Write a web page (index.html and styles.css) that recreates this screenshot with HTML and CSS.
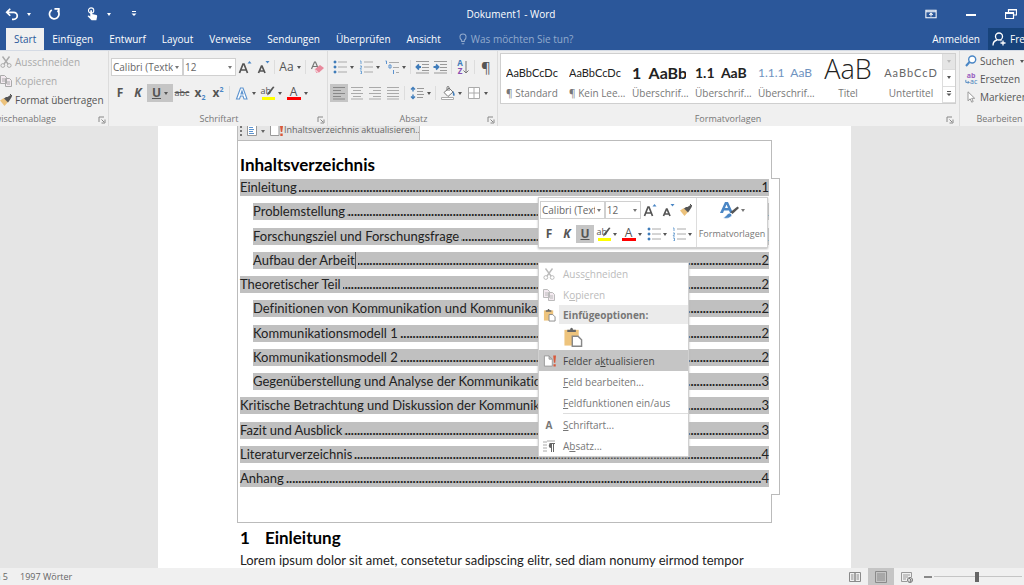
FILE: index.html
```html
<!DOCTYPE html>
<html lang="de">
<head>
    <meta charset="UTF-8">
    <title>Dokument1 - Word</title>
    <meta name="viewport" content="width=device-width, initial-scale=1.0">
    <link rel="stylesheet" href="styles.css">
</head>
<body>
<!-- Icon sprite -->
<svg class="sprite" aria-hidden="true">
    <symbol id="undo" viewBox="0 0 16 16"><path d="M6 2 2 6l4 4M2.500 6H10a4 4 0 0 1 0 8H8" fill="none" stroke="currentColor" stroke-width="2"/></symbol>
    <symbol id="redo" viewBox="0 0 16 16"><path d="M5.500 3.300A5.500 5.500 0 1 0 12 4M8.500 2h5v5" fill="none" stroke="currentColor" stroke-width="2"/></symbol>
    <symbol id="touch" viewBox="0 0 16 16"><circle cx="7" cy="4" r="3" fill="none" stroke="currentColor" stroke-width="1.300"/><path d="M6 4.500a1 1 0 0 1 2 0V8l5 1.200c1 .3 1 1 .8 2L13 15H7.500L3 10.500c.5-1 1.500-.8 3 .3z" fill="currentColor"/></symbol>
    <symbol id="customize" viewBox="0 0 8 8"><path d="M2 1.500h4" stroke="currentColor"/><path d="M1.500 3.500h5L4 6z" fill="currentColor"/></symbol>
    <symbol id="ribbon-opts" viewBox="0 0 14 12"><path d="M1 1.500h12v9H1zM1 3.500h12M7 9V5M5 7l2-2 2 2" fill="none" stroke="currentColor" stroke-width="1.200"/></symbol>
    <symbol id="minimize" viewBox="0 0 12 12"><path d="M1 7h10" stroke="currentColor" stroke-width="2"/></symbol>
    <symbol id="restore" viewBox="0 0 12 12"><path d="M3.500 4V1.500h8V7H9M.5 4.500h8v6h-8zM3 2h8M.5 5.500h8" fill="none" stroke="currentColor" stroke-width="1.200"/></symbol>
    <symbol id="bulb" viewBox="0 0 10 14"><path d="M3.500 10V8.500C.5 6.500.5 1.200 5 1.200s4.500 5.300 1.500 7.300V10zM3.500 12.500h3" fill="none" stroke="currentColor" stroke-width="1.200"/></symbol>
    <symbol id="person" viewBox="0 0 14 14"><circle cx="7" cy="4.500" r="3.500" fill="none" stroke="currentColor" stroke-width="1.300"/><path d="M1 13.500c0-3 2-5 4-5.500M8.500 8.500l1 .5M11 8.500v5M8.500 11h5" fill="none" stroke="currentColor" stroke-width="1.300"/></symbol>
    <symbol id="cut" viewBox="0 0 12 12"><path d="M2.500.5 8 8M9.500.5 4 8" stroke="currentColor" stroke-width="1.400"/><circle cx="2.800" cy="9.500" r="1.900" fill="none" stroke="currentColor"/><circle cx="9.200" cy="9.500" r="1.900" fill="none" stroke="currentColor"/></symbol>
    <symbol id="copy" viewBox="0 0 12 12"><path d="M.5.5h4l2 2v6h-6zM5.500 3.500h4l2 2v6h-6z" fill="#f3eaf0" stroke="currentColor"/><path d="M2 4h3M2 6h3M7 7h3M7 9h3" stroke="currentColor"/></symbol>
    <symbol id="brush" viewBox="0 0 12 12"><path d="M0 6.500 4 4l4 4-3.500 4z" fill="#ecc27c"/><path d="M4 4.500 8 8.500l1.500-2L12 2.500 10.500 1 7.500 3 6 3z" fill="#555"/><path d="M10 0l2 2" stroke="#555"/></symbol>
    <symbol id="paste" viewBox="0 0 14 14"><path d="M1 2h10v11H1z" fill="#eec47d"/><path d="M3 3.500V2h2c0-2 2-2 2 0h2v1.500z" fill="#666"/><path d="M6.500 6.500h4l2.500 2.500v4.500H6.500z" fill="#fff" stroke="#888"/></symbol>
    <symbol id="grow" viewBox="0 0 14 14"><path d="M1.500 13 5 4h1l3.500 9M3 10h5" fill="none" stroke="#555" stroke-width="1.700"/><path d="M9.500 3.500 11.500 1l2 2.500z" fill="#4a86c5"/></symbol>
    <symbol id="shrink" viewBox="0 0 14 14"><path d="M2.500 13 5.500 6h.5l3 7M4 11h4" fill="none" stroke="#555" stroke-width="1.700"/><path d="M9.500 1h4l-2 2.500z" fill="#4a86c5"/></symbol>
    <symbol id="eraser" viewBox="0 0 14 14"><path d="M1.500 9 4.500 2h1L8 8M3 6.500h4" fill="none" stroke="#777" stroke-width="1.200"/><path d="M4.500 9.500 10 5l4 3-5.500 5H6.500z" fill="#e8899c"/><path d="m5 9.500 3.500 3.500" stroke="#fff"/></symbol>
    <symbol id="effect" viewBox="0 0 14 14"><path d="M1.500 13 5.500 2h2.500l4 11H9L8 10H5.500l-1 3zM6 8h2L7 5z" fill="#fff" stroke="#5c93cf" stroke-width="1.100"/></symbol>
    <symbol id="pen" viewBox="0 0 14 14"><path d="M13.500 1 12 .5 7 6.500l-1 3 2.500-1.500z" fill="#555"/><path d="M1 11h13v3H1z" fill="#ff0"/></symbol>
    <symbol id="bullets" viewBox="0 0 14 14"><path d="M1 1h2v2H1zM1 6h2v2H1zM1 11h2v2H1z" fill="#3f7cba" stroke="#3f7cba" stroke-width=".6"/><path d="M5 2h9M5 7h9M5 12h9" stroke="#aaa"/></symbol>
    <symbol id="numbers" viewBox="0 0 14 14"><path d="M1 1h1v3M1 6h1.500v1L1 9h2M1 11h1.500v3H1" fill="none" stroke="#72a4d4"/><path d="M5 2h9M5 7h9M5 12h9" stroke="#aaa"/></symbol>
    <symbol id="levels" viewBox="0 0 14 14"><path d="M.5 1h1v3M4 5h2v3H4zM8.500 10v4" fill="none" stroke="#5c93cf"/><path d="M4 2.500h10M8 7.500h6M11 12.500h3" stroke="#aaa"/></symbol>
    <symbol id="outdent" viewBox="0 0 14 14"><path d="M1 1.500h13M7 4.500h7M7 7.500h7M7 10.500h7M1 13h13" stroke="#999"/><path d="M6 7H2M4 4.500 1.500 7 4 9.500" fill="none" stroke="#3f7cba" stroke-width="1.800"/></symbol>
    <symbol id="indent" viewBox="0 0 14 14"><path d="M1 1.500h13M7 4.500h7M7 7.500h7M7 10.500h7M1 13h13" stroke="#999"/><path d="M.5 7h4M3 4.500 5.500 7 3 9.500" fill="none" stroke="#3f7cba" stroke-width="1.800"/></symbol>
    <symbol id="arrow-down" viewBox="0 0 6 14"><path d="M3 1v12M.5 10.500 3 13l2.500-2.500" fill="none" stroke="#777"/></symbol>
    <symbol id="al" viewBox="0 0 14 14"><path d="M1 1.500h12M1 4.500h8M1 7.500h12M1 10.500h8M1 13h12" stroke="#888"/></symbol>
    <symbol id="ac" viewBox="0 0 14 14"><path d="M1 1.500h12M3 4.500h8M1 7.500h12M3 10.500h8M1 13h12" stroke="#aaa"/></symbol>
    <symbol id="ar" viewBox="0 0 14 14"><path d="M1 1.500h12M5 4.500h8M1 7.500h12M5 10.500h8M1 13h12" stroke="#aaa"/></symbol>
    <symbol id="aj" viewBox="0 0 14 14"><path d="M1 1.500h12M1 4.500h12M1 7.500h12M1 10.500h12M1 13h12" stroke="#aaa"/></symbol>
    <symbol id="spacing" viewBox="0 0 14 14"><path d="M3 1.500v4M3 8.500v4M1 3.500 3 1.500l2 2M1 10.500l2 2 2-2" fill="none" stroke="#3f7cba" stroke-width="1.400"/><path d="M7 2.500h7M7 5.500h6M7 8.500h7M7 11.500h6" stroke="#999"/></symbol>
    <symbol id="bucket" viewBox="0 0 14 14"><path d="M3 6.500 8 2l4 4-5 4.500z" fill="#fff" stroke="#777"/><path d="M6 5V1.500c0-1.500 2-1.500 2 0V5" fill="none" stroke="#777"/><path d="M12 5c2 2 2 5 1 5s-1.500-2-1-5z" fill="#3f7cba"/><path d="M.5 11.500h12v2H.5z" fill="#fff" stroke="#aaa"/></symbol>
    <symbol id="borders" viewBox="0 0 14 14"><path d="M1.500 1.500h11v11h-11zM7 1.500v11M1.500 7h11" fill="#fff" stroke="#aaa"/></symbol>
    <symbol id="launcher" viewBox="0 0 8 8"><path d="M1 6V1h5M3.500 3.500 6 6M7 3.500V7H3.500" fill="none" stroke="#888"/></symbol>
    <symbol id="search" viewBox="0 0 12 12"><circle cx="7.200" cy="4.500" r="3.500" fill="#fff" stroke="#4a86c5" stroke-width="1.400"/><path d="M4.500 7 1 11" stroke="#4a86c5" stroke-width="2"/></symbol>
    <symbol id="swap" viewBox="0 0 6 5"><path d="M1 0v3h4M3.500 1.500 5 3 3.500 4.500" fill="none" stroke="#3f7cba"/></symbol>
    <symbol id="cursor" viewBox="0 0 12 12"><path d="M3 .8v9l2.200-2 1.500 3.400 1.500-.7-1.500-3.200h3z" fill="#fff" stroke="#999"/></symbol>
    <symbol id="toc" viewBox="0 0 10 10"><path d="M.5-1h9V9.500h-9z" fill="#fff" stroke="#999"/><path d="M2 1.500h4M2 3.500h5M2 5.500h4M2 7.500h5" stroke="#5c93cf"/></symbol>
    <symbol id="update" viewBox="0 0 14 14"><path d="M1.500 1.500h5L10 5v7.500H1.500zM6.500 1.500V5H10" fill="#fff" stroke="#999"/><path d="M11 1h3l-.8 8h-1.400zM11.300 10.500h2.400v2.500h-2.400z" fill="#d8583a"/></symbol>
    <symbol id="update-bar" viewBox="0 0 14 10"><path d="M1.500-1v10.500H10V-1z" fill="#fff" stroke="#999"/><path d="M11 0h3l-.8 6h-1.400zM11.300 7.500h2.400V10h-2.400z" fill="#d8583a"/></symbol>
    <symbol id="styles" viewBox="0 0 20 18"><path d="M1 12 6 1h3l5 11h-3l-1-2.500H5L4 12zM6 7h3L7.500 3.500z" fill="#4a86c5"/><path d="M18.500 5.500 20 7l-6.500 6-2-2z" fill="#555"/><path d="M4 17c3-1 4-5 7-5l2 2c-1 3-5 4-9 3z" fill="#4a86c5" stroke="#fff" stroke-width=".6"/></symbol>
    <symbol id="para" viewBox="0 0 12 12"><path d="M0 2h4M0 5h4M0 8h4M0 11h4M4 1h8" stroke="#aaa"/><path d="M8.500 4v8M10.500 4v8M6.500 3.500H12" stroke="#666"/><path d="M9 3.500H8a2 2 0 0 0 0 4.500h1z" fill="#666"/></symbol>
    <symbol id="read" viewBox="0 0 12 12"><path d="M.5 1.500H6v9H.5zM6 1.500h5.500v9H6zM2 4h2.500M2 6h2.500M2 8h2.500M7.500 4H10M7.500 6H10M7.500 8H10" fill="none" stroke="#8a8a8a"/></symbol>
    <symbol id="print" viewBox="0 0 12 12"><path d="M.5.5h11v11H.5zM2 3h8M2 5h8M2 7h8M2 9h8" fill="none" stroke="#8a8a8a"/></symbol>
    <symbol id="web" viewBox="0 0 12 12"><path d="M6 10.500H.5v-9h10V6M2 4h7M2 6h5M2 8h3" fill="none" stroke="#999"/><circle cx="9" cy="9" r="2.500" fill="#ddd" stroke="#777"/><path d="m8 7 2 2-1 2" fill="none" stroke="#777"/></symbol>
</svg>

<header class="titlebar">
    <div class="quick">
        <button class="plain" aria-label="Rückgängig"><svg class="icon"><use href="#undo"/></svg></button>
        <i class="caret"></i>
        <button class="plain" aria-label="Wiederholen"><svg class="icon"><use href="#redo"/></svg></button>
        <button class="plain touch" aria-label="Touchmodus"><svg class="icon"><use href="#touch"/></svg></button>
        <i class="caret"></i>
        <button class="plain more" aria-label="Anpassen"><svg class="icon-xs"><use href="#customize"/></svg></button>
    </div>
    <h1 class="title">Dokument1 - Word</h1>
    <div class="window-buttons">
        <button class="plain" aria-label="Menüband-Anzeige"><svg class="icon-sm"><use href="#ribbon-opts"/></svg></button>
        <button class="plain" aria-label="Minimieren"><svg class="icon-sm"><use href="#minimize"/></svg></button>
        <button class="plain" aria-label="Verkleinern"><svg class="icon-sm"><use href="#restore"/></svg></button>
    </div>
</header>

<nav class="tabs">
    <a href="#" class="tab active">Start</a>
    <a href="#" class="tab">Einfügen</a>
    <a href="#" class="tab">Entwurf</a>
    <a href="#" class="tab">Layout</a>
    <a href="#" class="tab">Verweise</a>
    <a href="#" class="tab">Sendungen</a>
    <a href="#" class="tab">Überprüfen</a>
    <a href="#" class="tab">Ansicht</a>
    <button class="plain tell-me"><svg class="icon-sm"><use href="#bulb"/></svg>Was möchten Sie tun?</button>
    <a href="#" class="tab sign-in">Anmelden</a>
    <button class="plain share"><svg class="icon"><use href="#person"/></svg>Freigeben</button>
</nav>

<div class="ribbon">
    <section class="group clipboard">
        <div class="stack">
            <button class="plain cmd" disabled><svg class="icon-sm"><use href="#cut"/></svg>Ausschneiden</button>
            <button class="plain cmd" disabled><svg class="icon-sm"><use href="#copy"/></svg>Kopieren</button>
            <button class="plain cmd"><svg class="icon-sm"><use href="#brush"/></svg>Format übertragen</button>
        </div>
        <div class="group-label"><span class="cut-left">Zwischenablage</span><svg class="launcher"><use href="#launcher"/></svg></div>
    </section>

    <section class="group font">
        <div class="row">
            <label class="combo combo-font"><select aria-label="Schriftart"><option>Calibri (Textkörper)</option></select></label>
            <label class="combo combo-size"><select aria-label="Schriftgrad"><option>12</option></select></label>
            <button class="tool" aria-label="Vergrößern"><svg class="icon"><use href="#grow"/></svg></button>
            <button class="tool" aria-label="Verkleinern"><svg class="icon"><use href="#shrink"/></svg></button>
            <i class="sep"></i>
            <button class="tool drop big">Aa<i class="caret"></i></button>
            <i class="sep"></i>
            <button class="tool" aria-label="Formatierung löschen"><svg class="icon"><use href="#eraser"/></svg></button>
        </div>
        <div class="row">
            <button class="tool"><b>F</b></button>
            <button class="tool"><b><em>K</em></b></button>
            <button class="tool drop on"><b><u>U</u></b><i class="caret"></i></button>
            <button class="tool small"><s>abc</s></button>
            <button class="tool"><b>x<sub>2</sub></b></button>
            <button class="tool"><b>x<sup>2</sup></b></button>
            <i class="sep"></i>
            <button class="tool drop" aria-label="Texteffekte"><svg class="icon"><use href="#effect"/></svg><i class="caret"></i></button>
            <button class="tool drop"><span class="marker"><svg class="icon"><use href="#pen"/></svg>ab</span><i class="caret"></i></button>
            <button class="tool drop"><span class="red">A</span><i class="caret"></i></button>
        </div>
        <div class="group-label">Schriftart<svg class="launcher"><use href="#launcher"/></svg></div>
    </section>

    <section class="group paragraph">
        <div class="row">
            <button class="tool drop" aria-label="Aufzählung"><svg class="icon"><use href="#bullets"/></svg><i class="caret"></i></button>
            <button class="tool drop" aria-label="Nummerierung"><svg class="icon"><use href="#numbers"/></svg><i class="caret"></i></button>
            <button class="tool drop" aria-label="Liste"><svg class="icon"><use href="#levels"/></svg><i class="caret"></i></button>
            <i class="sep"></i>
            <button class="tool" aria-label="Einzug verkleinern"><svg class="icon"><use href="#outdent"/></svg></button>
            <button class="tool" aria-label="Einzug vergrößern"><svg class="icon"><use href="#indent"/></svg></button>
            <i class="sep"></i>
            <button class="tool"><span class="az"><b>A</b><b>Z</b></span><svg class="arrow"><use href="#arrow-down"/></svg></button>
            <i class="sep"></i>
            <button class="tool pilcrow">¶</button>
        </div>
        <div class="row">
            <button class="tool on" aria-label="Linksbündig"><svg class="icon"><use href="#al"/></svg></button>
            <button class="tool" aria-label="Zentriert"><svg class="icon"><use href="#ac"/></svg></button>
            <button class="tool" aria-label="Rechtsbündig"><svg class="icon"><use href="#ar"/></svg></button>
            <button class="tool" aria-label="Blocksatz"><svg class="icon"><use href="#aj"/></svg></button>
            <i class="sep"></i>
            <button class="tool drop" aria-label="Zeilenabstand"><svg class="icon"><use href="#spacing"/></svg><i class="caret"></i></button>
            <i class="sep"></i>
            <button class="tool drop" aria-label="Schattierung"><svg class="icon"><use href="#bucket"/></svg><i class="caret"></i></button>
            <button class="tool drop" aria-label="Rahmen"><svg class="icon"><use href="#borders"/></svg><i class="caret"></i></button>
        </div>
        <div class="group-label">Absatz<svg class="launcher"><use href="#launcher"/></svg></div>
    </section>

    <section class="group styles">
        <div class="gallery">
            <button class="style"><span class="sample">AaBbCcDc</span><span class="name">¶ Standard</span></button>
            <button class="style"><span class="sample">AaBbCcDc</span><span class="name">¶ Kein Lee...</span></button>
            <button class="style"><span class="sample h-one">1&nbsp; AaBb</span><span class="name">Überschrif...</span></button>
            <button class="style"><span class="sample h-two">1.1&nbsp; AaB</span><span class="name">Überschrif...</span></button>
            <button class="style"><span class="sample h-three">1.1.1&nbsp; AaB</span><span class="name">Überschrif...</span></button>
            <button class="style center"><span class="sample headline">AaB</span><span class="name">Titel</span></button>
            <button class="style center"><span class="sample subtitle">AaBbCcD</span><span class="name">Untertitel</span></button>
            <div class="gallery-scroll">
                <button class="up" aria-label="Nach oben"><i class="caret"></i></button>
                <button aria-label="Nach unten"><i class="caret"></i></button>
                <button aria-label="Weitere"><svg class="icon-xs"><use href="#customize"/></svg></button>
            </div>
        </div>
        <div class="group-label">Formatvorlagen<svg class="launcher"><use href="#launcher"/></svg></div>
    </section>

    <section class="group editing">
        <div class="stack">
            <button class="plain cmd"><svg class="icon-sm"><use href="#search"/></svg>Suchen<i class="caret"></i></button>
            <button class="plain cmd"><span class="replace"><b>ab</b><span><svg class="swap"><use href="#swap"/></svg>ac</span></span>Ersetzen</button>
            <button class="plain cmd"><svg class="icon-sm"><use href="#cursor"/></svg>Markieren</button>
        </div>
        <div class="group-label">Bearbeiten</div>
    </section>
</div>

<main class="workspace">
    <article class="page">
        <div class="toc-bar">
            <i class="grip"></i>
            <svg class="toc-icon"><use href="#toc"/></svg>
            <i class="caret"></i>
            <svg class="update-icon"><use href="#update-bar"/></svg>
            <span>Inhaltsverzeichnis aktualisieren...</span>
        </div>
        <section class="toc">
            <h2 class="toc-title">Inhaltsverzeichnis</h2>
            <div class="toc-list">
                <p class="entry"><span>Einleitung</span><i class="dots"></i><span>1</span></p>
                <p class="entry sub"><span>Problemstellung</span><i class="dots"></i><span>1</span></p>
                <p class="entry sub"><span>Forschungsziel und Forschungsfrage</span><i class="dots"></i><span>1</span></p>
                <p class="entry sub"><span class="caret-here">Aufbau der Arbeit</span><i class="dots"></i><span>2</span></p>
                <p class="entry"><span>Theoretischer Teil</span><i class="dots"></i><span>2</span></p>
                <p class="entry sub"><span>Definitionen von Kommunikation und Kommunikation</span><i class="dots"></i><span>2</span></p>
                <p class="entry sub"><span>Kommunikationsmodell 1</span><i class="dots"></i><span>2</span></p>
                <p class="entry sub"><span>Kommunikationsmodell 2</span><i class="dots"></i><span>2</span></p>
                <p class="entry sub"><span>Gegenüberstellung und Analyse der Kommunikation</span><i class="dots"></i><span>3</span></p>
                <p class="entry"><span>Kritische Betrachtung und Diskussion der Kommunikation</span><i class="dots"></i><span>3</span></p>
                <p class="entry"><span>Fazit und Ausblick</span><i class="dots"></i><span>3</span></p>
                <p class="entry"><span>Literaturverzeichnis</span><i class="dots"></i><span>4</span></p>
                <p class="entry"><span>Anhang</span><i class="dots"></i><span>4</span></p>
            </div>
            <div class="toc-end"></div>
        </section>
        <h2 class="chapter"><span>1</span>Einleitung</h2>
        <p class="body-text">Lorem ipsum dolor sit amet, consetetur sadipscing elitr, sed diam nonumy eirmod tempor</p>

        <div class="mini">
            <div class="mini-tools">
                <div class="row">
                    <label class="combo combo-font"><select aria-label="Schriftart"><option>Calibri (Textkörper)</option></select></label>
                    <label class="combo combo-size"><select aria-label="Schriftgrad"><option>12</option></select></label>
                    <button class="tool" aria-label="Vergrößern"><svg class="icon"><use href="#grow"/></svg></button>
                    <button class="tool" aria-label="Verkleinern"><svg class="icon"><use href="#shrink"/></svg></button>
                    <button class="tool" aria-label="Format übertragen"><svg class="icon-sm"><use href="#brush"/></svg></button>
                </div>
                <div class="row">
                    <button class="tool"><b>F</b></button>
                    <button class="tool"><b><em>K</em></b></button>
                    <button class="tool on"><b><u>U</u></b></button>
                    <button class="tool drop"><span class="marker"><svg class="icon"><use href="#pen"/></svg>ab</span><i class="caret"></i></button>
                    <button class="tool drop"><span class="red">A</span><i class="caret"></i></button>
                    <button class="tool drop" aria-label="Aufzählung"><svg class="icon"><use href="#bullets"/></svg><i class="caret"></i></button>
                    <button class="tool drop" aria-label="Nummerierung"><svg class="icon"><use href="#numbers"/></svg><i class="caret"></i></button>
                </div>
            </div>
            <button class="plain mini-styles"><span><svg class="icon-lg"><use href="#styles"/></svg><i class="caret"></i></span>Formatvorlagen</button>
        </div>

        <div class="menu">
            <button class="plain item" disabled><svg class="icon-sm"><use href="#cut"/></svg><span>Auss<u>c</u>hneiden</span></button>
            <button class="plain item" disabled><svg class="icon-sm"><use href="#copy"/></svg><span>K<u>o</u>pieren</span></button>
            <div class="item heading"><svg class="icon"><use href="#paste"/></svg><b>Einfügeoptionen:</b></div>
            <button class="plain paste-option" aria-label="Einfügen"><svg class="icon-lg"><use href="#paste"/></svg></button>
            <button class="plain item hover"><svg class="icon"><use href="#update"/></svg><span>Felder a<u>k</u>tualisieren</span></button>
            <button class="plain item"><i class="blank"></i><span><u>F</u>eld bearbeiten...</span></button>
            <button class="plain item"><i class="blank"></i><span><u>F</u>eldfunktionen ein/aus</span></button>
            <hr>
            <button class="plain item"><b class="blank">A</b><span><u>S</u>chriftart...</span></button>
            <button class="plain item"><svg class="icon-sm"><use href="#para"/></svg><span>A<u>b</u>satz...</span></button>
        </div>
    </article>
</main>

<footer class="status">
    <span class="page-count">Seite 2 von 5</span>
    <span class="words">1997 Wörter</span>
    <div class="views">
        <button class="view" aria-label="Lesemodus"><svg class="icon-sm"><use href="#read"/></svg></button>
        <button class="view on" aria-label="Seitenlayout"><svg class="icon-sm"><use href="#print"/></svg></button>
        <button class="view" aria-label="Weblayout"><svg class="icon-sm"><use href="#web"/></svg></button>
    </div>
    <button class="plain zoom-out" aria-label="Verkleinern"></button>
    <input class="zoom" type="range" min="0" max="100" value="49" aria-label="Zoom">
</footer>
</body>
</html>
```
FILE: styles.css
```css
* {
    box-sizing: border-box;
}
body {
    display: flex;
    flex-direction: column;
    height: 100vh;
    margin: 0;
    overflow: hidden;
    background-color: #e5e5e5;
    color: #555;
    font-family: "Open Sans", "Noto Sans", sans-serif;
    font-size: 10px;
    line-height: 14px;
}
button, select {
    font: inherit;
    color: inherit;
}
button {
    padding: 0;
    border: 0;
    background: none;
}
h1, h2, p {
    margin: 0;
}
svg {
    flex: none;
    display: block;
}
.sprite {
    position: absolute;
    width: 0;
    height: 0;
}
.plain {
    display: flex;
    align-items: center;
    white-space: nowrap;
}
.icon {
    width: 14px;
    height: 14px;
}
.icon-sm {
    width: 12px;
    height: 12px;
}
.icon-xs {
    width: 8px;
    height: 8px;
}
.icon-lg {
    width: 20px;
    height: 20px;
}
.caret {
    flex: none;
    border: 2px solid transparent;
    border-top: 3px solid currentColor;
    border-bottom: 0;
}

/* Title bar */
.titlebar {
    flex: none;
    display: flex;
    align-items: center;
    height: 28px;
    padding: 0 7px 0 5px;
    background-color: #2b579a;
    color: #fff;
}
.quick, .window-buttons {
    flex: 1;
    display: flex;
    align-items: center;
}
.quick {
    gap: 8px;
}
.quick .caret + .plain {
    margin-left: 8px;
}
.quick .touch {
    margin-left: 16px;
}
.quick .caret + .more {
    margin-left: 11px;
}
.title {
    font-size: 10px;
    font-weight: normal;
}
.window-buttons {
    justify-content: flex-end;
    gap: 28px;
}

/* Tabs */
.tabs {
    flex: none;
    display: flex;
    height: 22px;
    padding-left: 6px;
    background-color: #2b579a;
    color: #fff;
    line-height: 22px;
}
.tab {
    padding: 0 8px;
    color: #fff;
    text-decoration: none;
}
.tab.active {
    background-color: #f0f0f0;
    color: #2b579a;
}
.tell-me {
    gap: 2px;
    margin-left: 8px;
    color: #93abcd;
}
.sign-in {
    margin-left: auto;
}
.share {
    gap: 4px;
    width: 36px;
    padding-left: 4px;
    overflow: hidden;
    background-color: #17437b;
}

/* Ribbon */
.ribbon {
    flex: none;
    display: flex;
    height: 76px;
    overflow: hidden;
    background-color: #f0f0f0;
    border-top: 1px solid #d5dbe5;
}
.group {
    flex: none;
    display: flex;
    flex-direction: column;
    gap: 8px;
    padding: 7px 0 0 2px;
    border-right: 1px solid #dcdcdc;
}
.group-label {
    position: relative;
    margin-top: auto;
    color: #777;
    font-size: 9px;
    text-align: center;
}
.launcher {
    position: absolute;
    right: 2px;
    top: 4px;
    width: 8px;
    height: 8px;
}
.clipboard, .editing {
    gap: 0;
}
.clipboard {
    width: 109px;
    padding: 1px 0 0;
}
.cut-left {
    display: flex;
    justify-content: flex-end;
    width: 56px;
    overflow: hidden;
}
.stack {
    display: flex;
    flex-direction: column;
}
.cmd {
    gap: 3px;
    height: 19px;
}
.cmd:disabled, .item:disabled {
    color: #aaa;
}
.row {
    display: flex;
    align-items: center;
    height: 18px;
}
.font {
    width: 219px;
}
.paragraph {
    width: 170px;
}
.combo {
    position: relative;
    height: 18px;
    background-color: #fff;
    border: 1px solid #d0d0d0;
}
.combo::after {
    content: "";
    position: absolute;
    right: 3px;
    top: 7px;
    border: 2px solid transparent;
    border-top: 3px solid #777;
    border-bottom: 0;
}
.combo select {
    appearance: none;
    width: 100%;
    height: 16px;
    padding: 0 9px 0 1px;
    border: 0;
    background: none;
    color: #666;
}
.combo-font {
    width: 72px;
}
.combo-size {
    width: 53px;
}
.tool {
    flex: none;
    display: flex;
    align-items: center;
    justify-content: center;
    width: 18px;
    height: 18px;
    color: #555;
    font-size: 12px;
}
.tool.drop {
    gap: 3px;
    width: 26px;
}
.tool.on, .view.on {
    background-color: #c5c5c5;
}
.tool.small {
    font-size: 9px;
}
.tool sub, .tool sup {
    color: #4a86c5;
    font-size: 7px;
    line-height: 0;
}
.sep {
    flex: none;
    width: 5px;
    height: 14px;
    background: linear-gradient(#ddd, #ddd) center / 1px 100% no-repeat;
}
.marker {
    position: relative;
    width: 14px;
    height: 14px;
    font-size: 9px;
    line-height: 9px;
    text-align: left;
}
.marker .icon {
    position: absolute;
    left: 0;
    top: 0;
}
.red {
    width: 14px;
    height: 14px;
    border-bottom: 3px solid #f00;
    line-height: 12px;
}
.az {
    display: flex;
    flex-direction: column;
    color: #3f7cba;
    font-size: 8px;
    line-height: 8px;
}
.az b + b {
    color: #8a4fb0;
}
.arrow {
    width: 6px;
    height: 14px;
}
.pilcrow {
    font-size: 15px;
}

/* Style gallery */
.styles {
    flex: 1 0 0;
    padding: 2px 3px 0 2px;
}
.gallery {
    display: flex;
    height: 53px;
    background-color: #fff;
    border: 1px solid #cfcfcf;
}
.style {
    flex: 1 1 0;
    display: flex;
    flex-direction: column;
    width: 0;
    padding: 5px 4px 0 5px;
    overflow: hidden;
    text-align: left;
    white-space: nowrap;
}
.sample {
    width: 100%;
    height: 27px;
    overflow: hidden;
    color: #222;
    font-family: Lato, sans-serif;
    font-size: 11px;
    line-height: 27px;
}
.name {
    width: 100%;
    color: #777;
}
.style.center {
    text-align: center;
}
.h-one {
    font-size: 16px;
    font-weight: bold;
}
.h-two {
    font-size: 14px;
    font-weight: bold;
}
.h-three {
    color: #6f93bf;
    font-size: 12px;
}
.headline {
    font-family: "Open Sans", sans-serif;
    font-size: 27px;
    font-weight: 300;
    line-height: 20px;
}
.subtitle {
    color: #666;
    letter-spacing: 1px;
}
.gallery-scroll {
    display: flex;
    flex-direction: column;
    width: 13px;
    border-left: 1px solid #ddd;
}
.gallery-scroll button {
    flex: 1;
    display: flex;
    align-items: center;
    justify-content: center;
    border-bottom: 1px solid #ddd;
}
.gallery-scroll .up {
    background-color: #e5e5e5;
    color: #bbb;
}
.editing {
    width: 64px;
    padding: 1px 0 0 5px;
    overflow: hidden;
    border-right: 0;
}
.editing .caret {
    margin-left: 3px;
}
.editing .cmd {
    height: 18px;
}
.editing .group-label {
    padding-left: 10px;
}
.replace {
    width: 12px;
    color: #9a5fc0;
    font-size: 7px;
    line-height: 6px;
}
.replace span {
    display: flex;
    color: #3f7cba;
}
.swap {
    width: 5px;
    height: 6px;
}

/* Document */
.workspace {
    flex: 1;
    min-height: 0;
    display: flex;
    justify-content: center;
    padding-right: 15px;
    overflow: hidden;
}
.page {
    position: relative;
    width: 693px;
    padding: 0 79px;
    background-color: #fff;
    color: #222;
    font-family: Lato, "Liberation Sans", sans-serif;
    font-size: 13px;
    font-variant-ligatures: none;
    line-height: 17px;
}
.toc-bar {
    display: flex;
    align-items: flex-start;
    width: 183px;
    height: 14px;
    padding: 0 2px;
    overflow: hidden;
    background-color: #e5e5e5;
    border: solid #bbb;
    border-width: 0 1px;
    color: #666;
    font-family: "Open Sans", "Noto Sans", sans-serif;
    font-size: 9px;
    line-height: 8px;
    white-space: nowrap;
}
.toc-bar .caret {
    margin: 4px 4px 0;
}
.toc-icon {
    width: 10px;
    height: 10px;
    margin-left: 5px;
}
.update-icon {
    width: 14px;
    height: 10px;
    margin-right: 1px;
}
.grip {
    height: 10px;
    border-left: 2px dotted #777;
}
.toc {
    border-left: 1px solid #bbb;
}
.toc-title {
    height: 38px;
    padding: 13px 0 0 2px;
    border: solid #bbb;
    border-width: 1px 1px 0 0;
    color: #000;
    font-size: 17px;
    line-height: 22px;
}
/* widest part of the outline, sticks out to the right */
.toc-list {
    position: relative;
    display: flex;
    flex-direction: column;
    justify-content: space-between;
    min-height: 317px;
    margin-right: -8px;
    padding: 1px 10px 8px 2px;
    border-right: 1px solid #bbb;
}
.toc-list::before, .toc-list::after {
    content: "";
    position: absolute;
    right: 0;
    width: 8px;
    border-top: 1px solid #bbb;
}
.toc-list::before {
    top: 0;
}
.toc-list::after {
    bottom: 0;
}
.toc-end {
    height: 28px;
    border: solid #bbb;
    border-width: 0 1px 1px 0;
}
.entry {
    display: flex;
    background-color: #c0c0c0;
    white-space: nowrap;
}
.sub {
    margin-left: 13px;
}
.dots {
    flex: 1;
    width: 0;
    margin-left: 2px;
    overflow: hidden;
    direction: rtl;
    font-style: normal;
    font-weight: bold;
}
.dots::before {
    content: "......................................................................................................................................................................................................................";
}
.caret-here {
    border-right: 1px solid #555;
}
.chapter {
    display: flex;
    gap: 15px;
    padding: 4px 3px 3px;
    color: #000;
    font-size: 17px;
    line-height: 22px;
}
.body-text {
    padding: 0 3px;
    white-space: nowrap;
}

/* Floating toolbar and context menu, both over the text */
.mini, .menu {
    position: absolute;
    left: 380px;
    background-color: #fff;
    border: 1px solid #d0d0d0;
    box-shadow: 0 1px 2px #bbb;
    color: #777;
    font-family: "Open Sans", "Noto Sans", sans-serif;
    font-size: 10px;
    line-height: 14px;
}
.mini {
    top: 71px;
    display: flex;
    width: 230px;
    height: 51px;
}
.mini-tools {
    display: flex;
    flex-direction: column;
    gap: 6px;
    width: 158px;
    padding: 3px 1px;
    border-right: 1px solid #ddd;
}
.mini .combo-font {
    width: 66px;
}
.mini .combo-size {
    width: 37px;
}
.mini .drop {
    gap: 2px;
    width: 25px;
}
.mini-styles {
    flex: 1;
    flex-direction: column;
    justify-content: space-between;
    padding: 2px 0 6px;
    font-size: 9px;
}
.mini-styles span {
    display: flex;
    align-items: center;
    gap: 2px;
}
.menu {
    top: 136px;
    width: 151px;
}
.item {
    width: 100%;
    height: 21px;
    gap: 7px;
    padding-left: 4px;
    display: flex;
    align-items: center;
}
.item .icon-sm, .blank {
    width: 12px;
    margin-right: 1px;
}
.item .icon {
    width: 13px;
}
.item:disabled {
    color: #bbb;
}
.heading {
    height: 19px;
    background: linear-gradient(#ebebeb, #ebebeb) 20px 0 no-repeat;
}
.paste-option {
    height: 26px;
    padding-left: 24px;
}
.item.hover {
    background-color: #c5c5c5;
    color: #444;
}
.menu hr {
    margin: 0 0 0 24px;
    border: 0;
    border-top: 1px solid #ddd;
}

/* Status bar */
.status {
    flex: none;
    display: flex;
    align-items: center;
    height: 17px;
    background-color: #f0f0f0;
    color: #666;
    font-size: 9px;
}
.page-count {
    display: flex;
    justify-content: flex-end;
    width: 8px;
    overflow: hidden;
    white-space: nowrap;
}
.words {
    margin-left: 12px;
}
.views {
    display: flex;
    margin-left: auto;
}
.view {
    display: flex;
    align-items: center;
    justify-content: center;
    width: 26px;
    height: 17px;
}
.zoom-out {
    width: 8px;
    height: 2px;
    margin: 0 2px 0 4px;
    background-color: #888;
}
.zoom {
    appearance: none;
    width: 88px;
    height: 12px;
    margin: 0 2px 0 0;
    background: linear-gradient(#c5c5c5, #c5c5c5) center / 100% 1px no-repeat;
}
.zoom::-webkit-slider-thumb {
    appearance: none;
    width: 4px;
    height: 10px;
    background-color: #666;
}
```
